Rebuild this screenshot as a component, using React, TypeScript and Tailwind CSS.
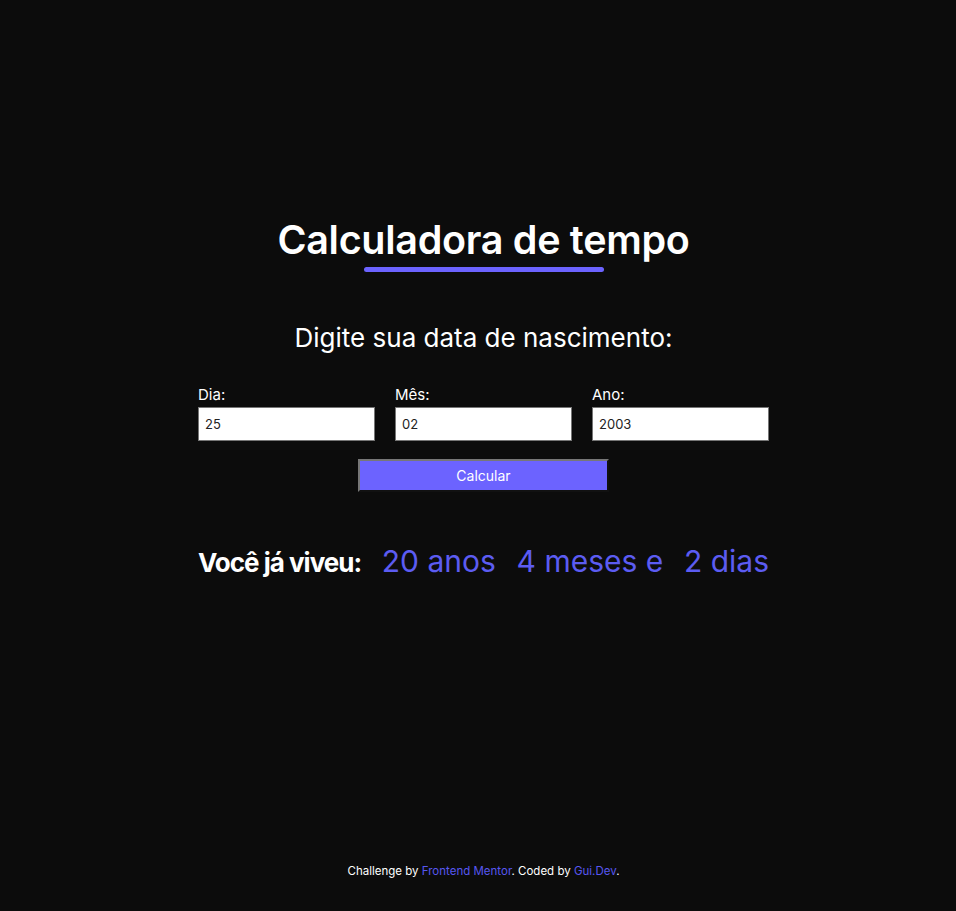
export default function App() {
  return (
    <div
      className="min-h-[911px] bg-[#0c0c0c] text-white flex flex-col items-center"
      style={{ fontFamily: 'Inter, "Open Sans", sans-serif' }}
    >
      <main className="ml-[11px] flex w-[571px] flex-col items-center pt-[216px]">
        <h1 className="text-[39.5px] font-semibold leading-[48px] tracking-[-0.3px]">Calculadora de tempo</h1>
        <div className="mt-[3px] h-[5px] w-[240px] rounded-full bg-[#6c63ff]" />

        <h2 className="mt-[50px] text-[26px] leading-[32px]">Digite sua data de nascimento:</h2>

        <div className="mt-[31px] grid w-full grid-cols-3 gap-[20px]">
          {[
            { label: 'Dia:', value: '25' },
            { label: 'Mês:', value: '02' },
            { label: 'Ano:', value: '2003' },
          ].map((f) => (
            <label key={f.label} className="flex flex-col">
              <span className="text-[15px] leading-[20px]">{f.label}</span>
              <input
                defaultValue={f.value}
                className="mt-[2px] h-[34px] w-full border border-[#767676] bg-white px-[6px] text-[13px] text-[#222] outline-none"
              />
            </label>
          ))}
        </div>

        <button
          type="button"
          className="mt-[18px] h-[33px] w-[251px] border-2 border-t-[#777] border-l-[#777] border-r-[#111] border-b-[#111] bg-[#6c63ff] text-[14px] text-white"
        >
          Calcular
        </button>

        <div className="mt-[47px] flex w-full items-baseline justify-between">
          <span className="text-[26px] font-bold tracking-[-1px]">Você já viveu:</span>
          <span className="text-[30px] text-[#5c5cf2]">20 anos</span>
          <span className="text-[30px] text-[#5c5cf2]">4 meses e</span>
          <span className="text-[30px] text-[#5c5cf2]">2 dias</span>
        </div>
      </main>

      <footer className="mt-auto ml-[11px] pb-[31px] text-[11.5px]">
        Challenge by <a className="text-[#5757f0]">Frontend Mentor</a>. Coded by{' '}
        <a className="text-[#5757f0]">Gui.Dev</a>.
      </footer>
    </div>
  );
}
